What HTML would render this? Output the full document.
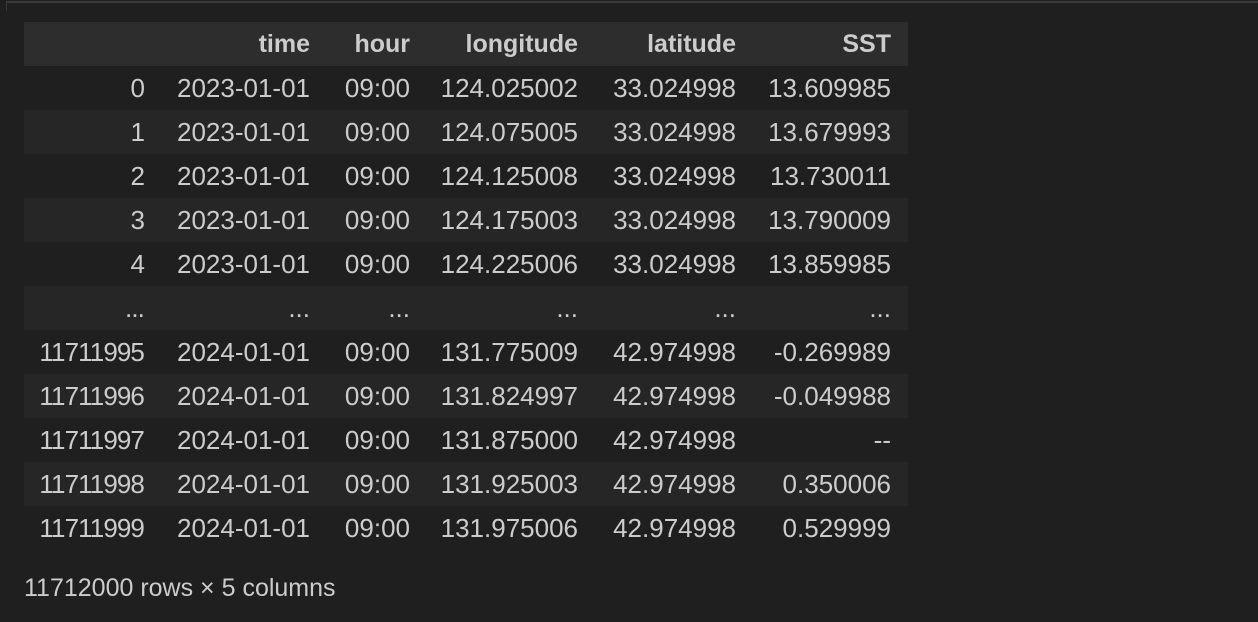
<!DOCTYPE html>
<html><head><style>
body{margin:0;width:1258px;height:622px;background:#1f1f1f;font-family:"Liberation Sans",sans-serif;color:#cccccc;overflow:hidden;position:relative}
.line{position:absolute;left:6px;right:0;top:1px;height:2px;background:#38383c}
.line2{position:absolute;left:6px;top:1px;width:1px;height:10px;background:#38383c}
table{position:absolute;left:24px;top:22px;border-collapse:collapse;font-size:26px}
td,th{height:44px;padding:0;text-align:right;white-space:nowrap;line-height:44px;vertical-align:middle;box-sizing:border-box}
th{font-weight:bold;background:#2d2d2d;font-size:25px}
tr:nth-child(odd) td{background:#262626}
tr{background:#1f1f1f}
td.c0{letter-spacing:-0.9px}
.c0{width:120px}.c1{width:166px}.c2{width:100px}.c3{width:168px}.c4{width:158px}.c5{width:172px;padding-right:17px}
.foot{position:absolute;left:24px;top:574px;font-size:25px}
</style></head><body>
<div class="line"></div><div class="line2"></div>
<table>
<tr><th class="c0"></th><th class="c1">time</th><th class="c2">hour</th><th class="c3">longitude</th><th class="c4">latitude</th><th class="c5">SST</th></tr>
<tr><td class="c0">0</td><td class="c1">2023-01-01</td><td class="c2">09:00</td><td class="c3">124.025002</td><td class="c4">33.024998</td><td class="c5">13.609985</td></tr>
<tr><td class="c0">1</td><td class="c1">2023-01-01</td><td class="c2">09:00</td><td class="c3">124.075005</td><td class="c4">33.024998</td><td class="c5">13.679993</td></tr>
<tr><td class="c0">2</td><td class="c1">2023-01-01</td><td class="c2">09:00</td><td class="c3">124.125008</td><td class="c4">33.024998</td><td class="c5">13.730011</td></tr>
<tr><td class="c0">3</td><td class="c1">2023-01-01</td><td class="c2">09:00</td><td class="c3">124.175003</td><td class="c4">33.024998</td><td class="c5">13.790009</td></tr>
<tr><td class="c0">4</td><td class="c1">2023-01-01</td><td class="c2">09:00</td><td class="c3">124.225006</td><td class="c4">33.024998</td><td class="c5">13.859985</td></tr>
<tr><td class="c0">...</td><td class="c1">...</td><td class="c2">...</td><td class="c3">...</td><td class="c4">...</td><td class="c5">...</td></tr>
<tr><td class="c0">11711995</td><td class="c1">2024-01-01</td><td class="c2">09:00</td><td class="c3">131.775009</td><td class="c4">42.974998</td><td class="c5">-0.269989</td></tr>
<tr><td class="c0">11711996</td><td class="c1">2024-01-01</td><td class="c2">09:00</td><td class="c3">131.824997</td><td class="c4">42.974998</td><td class="c5">-0.049988</td></tr>
<tr><td class="c0">11711997</td><td class="c1">2024-01-01</td><td class="c2">09:00</td><td class="c3">131.875000</td><td class="c4">42.974998</td><td class="c5">--</td></tr>
<tr><td class="c0">11711998</td><td class="c1">2024-01-01</td><td class="c2">09:00</td><td class="c3">131.925003</td><td class="c4">42.974998</td><td class="c5">0.350006</td></tr>
<tr><td class="c0">11711999</td><td class="c1">2024-01-01</td><td class="c2">09:00</td><td class="c3">131.975006</td><td class="c4">42.974998</td><td class="c5">0.529999</td></tr>
</table>
<div class="foot">11712000 rows × 5 columns</div>
</body></html>
